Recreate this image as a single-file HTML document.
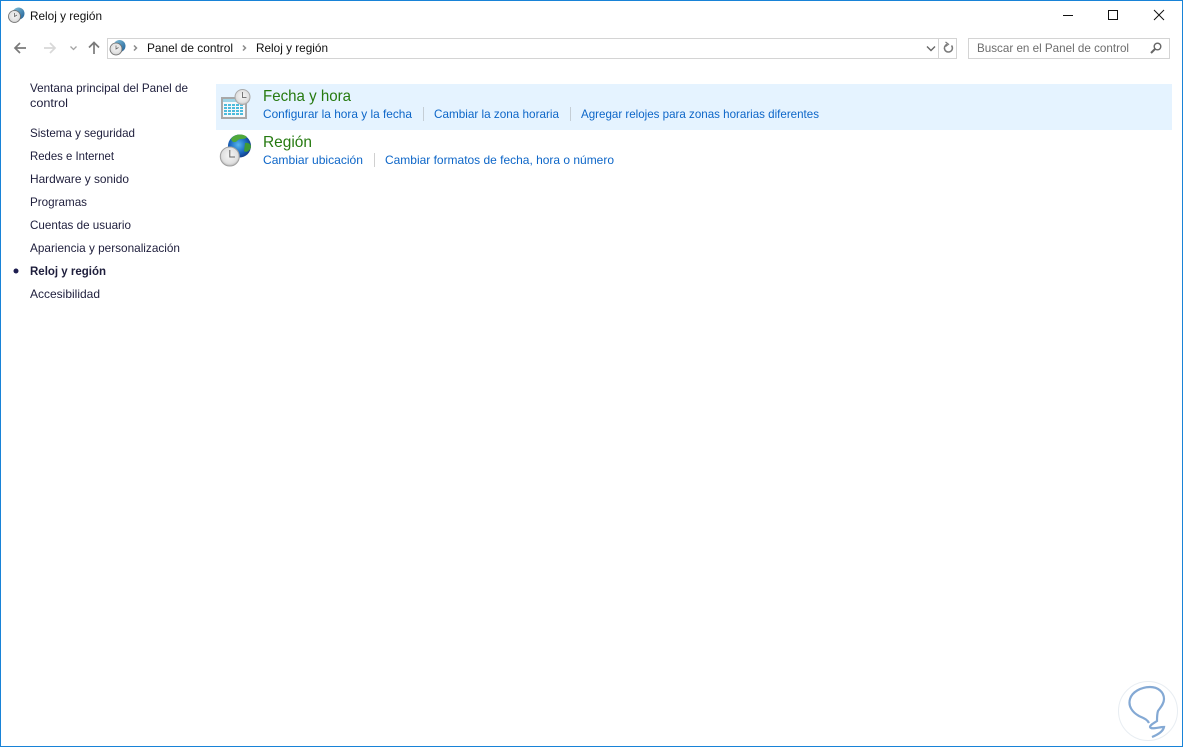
<!DOCTYPE html>
<html lang="es">
<head>
<meta charset="utf-8">
<title>Reloj y región</title>
<style>
html,body{margin:0;padding:0;width:1183px;height:747px;overflow:hidden;background:#fff}
svg{display:block;position:absolute;left:0;top:0}
text{font-family:"Liberation Sans",sans-serif;font-size:12px;fill:#1e1e3c}
.l{fill:#0d66c8}
.g{font-size:16px;fill:#267a10}
.b{fill:#111}
</style>
</head>
<body>
<svg width="1183" height="747" viewBox="0 0 1183 747" xmlns="http://www.w3.org/2000/svg">
<defs>
<radialGradient id="gl" cx="45%" cy="45%" r="60%"><stop offset="0" stop-color="#58b6ee"/><stop offset=".6" stop-color="#1a68c0"/><stop offset="1" stop-color="#12357e"/></radialGradient>
<radialGradient id="ck" cx="50%" cy="45%" r="60%"><stop offset="0" stop-color="#f6f6f6"/><stop offset=".7" stop-color="#e0e0e0"/><stop offset="1" stop-color="#a8a8a8"/></radialGradient>
<linearGradient id="sm" x1="0" y1="0" x2="1" y2="1"><stop offset="0" stop-color="#86c4dc"/><stop offset="1" stop-color="#1c5c94"/></linearGradient>
</defs>
<rect x="0.5" y="0.5" width="1182" height="746" fill="#fff" stroke="#1883d7"/>

<!-- title -->
<circle cx="18.500" cy="13.500" r="6" fill="url(#sm)"/>
<circle cx="14.500" cy="16.500" r="6" fill="url(#ck)" stroke="#6a6a6a" stroke-width=".8"/>
<path d="M14.500 13V16.500L17 15" fill="none" stroke="#666" stroke-width=".8"/>
<text x="30" y="20" class="b" textLength="72" lengthAdjust="spacingAndGlyphs">Reloj y región</text>

<!-- window controls -->
<rect x="1063" y="15" width="10" height="1" fill="#111"/>
<rect x="1108.500" y="10.500" width="9" height="9" fill="none" stroke="#111"/>
<path d="M1154 10L1164 20M1164 10L1154 20" stroke="#111" stroke-width="1" fill="none"/>

<!-- nav -->
<path d="M26 48H15M20 43L15 48L20 53" fill="none" stroke="#7a7a7a" stroke-width="1.700"/>
<path d="M55 48H44M50 43L55 48L50 53" fill="none" stroke="#d8d8d8" stroke-width="1.700"/>
<path d="M70.500 46.500L73.500 49.500L76.500 46.500" fill="none" stroke="#a4a4a4" stroke-width="1.300"/>
<path d="M94 54V43M89 47.500L94 42.500L99 47.500" fill="none" stroke="#7a7a7a" stroke-width="1.700"/>

<!-- address bar -->
<rect x="107.500" y="38.500" width="849" height="20" fill="#fff" stroke="#d4d4d4"/>
<line x1="938.500" y1="39" x2="938.500" y2="58" stroke="#d4d4d4"/>
<circle cx="119.500" cy="46" r="6" fill="url(#sm)"/>
<circle cx="116" cy="49" r="6" fill="url(#ck)" stroke="#6a6a6a" stroke-width=".8"/>
<path d="M116 45.500V49L118.500 47.500" fill="none" stroke="#666" stroke-width=".8"/>
<path d="M134 45.500L136.500 48L134 50.500" fill="none" stroke="#8a8a8a" stroke-width="1.500"/>
<text x="147" y="52" class="b" textLength="86" lengthAdjust="spacingAndGlyphs">Panel de control</text>
<path d="M243 45.500L245.500 48L243 50.500" fill="none" stroke="#8a8a8a" stroke-width="1.500"/>
<text x="256" y="52" class="b" textLength="72" lengthAdjust="spacingAndGlyphs">Reloj y región</text>
<path d="M927 46.500L931 50.500L935 46.500" fill="none" stroke="#666" stroke-width="1.400"/>
<path d="M951.500 45.500A4 4 0 1 1 947 44.300" fill="none" stroke="#7a7a7a" stroke-width="1.500"/>
<path d="M945.500 42L948.500 44.300L945.500 46.500" fill="none" stroke="#7a7a7a" stroke-width="1.200"/>

<!-- search -->
<rect x="968.500" y="38.500" width="201" height="20" fill="#fff" stroke="#d4d4d4"/>
<text x="977" y="52" style="fill:#6d6d6d" textLength="152" lengthAdjust="spacingAndGlyphs">Buscar en el Panel de control</text>
<circle cx="1157.500" cy="46.500" r="3.300" fill="none" stroke="#666" stroke-width="1.400"/>
<path d="M1155 49L1151 53" stroke="#666" stroke-width="2"/>

<!-- sidebar -->
<text x="30" y="92" textLength="158" lengthAdjust="spacingAndGlyphs">Ventana principal del Panel de</text>
<text x="30" y="107" textLength="38" lengthAdjust="spacingAndGlyphs">control</text>
<text x="30" y="137" textLength="105" lengthAdjust="spacingAndGlyphs">Sistema y seguridad</text>
<text x="30" y="160" textLength="84" lengthAdjust="spacingAndGlyphs">Redes e Internet</text>
<text x="30" y="183" textLength="99" lengthAdjust="spacingAndGlyphs">Hardware y sonido</text>
<text x="30" y="206" textLength="57" lengthAdjust="spacingAndGlyphs">Programas</text>
<text x="30" y="229" textLength="101" lengthAdjust="spacingAndGlyphs">Cuentas de usuario</text>
<text x="30" y="252" textLength="150" lengthAdjust="spacingAndGlyphs">Apariencia y personalización</text>
<circle cx="16" cy="271" r="2.500" fill="#1e1e50"/>
<text x="30" y="275" font-weight="bold" textLength="76" lengthAdjust="spacingAndGlyphs">Reloj y región</text>
<text x="30" y="298" textLength="70" lengthAdjust="spacingAndGlyphs">Accesibilidad</text>

<!-- highlight -->
<rect x="216" y="84" width="956" height="46" fill="#e5f3ff"/>

<!-- calendar icon -->
<rect x="222" y="98" width="24" height="20" fill="#f6f8fa" stroke="#a8a8a8" stroke-width="2"/>
<rect x="223" y="99" width="22" height="3" fill="#9fd4e6"/>
<g fill="#4dbbdc">
<rect x="224" y="104" width="3" height="2"/><rect x="228" y="104" width="3" height="2"/><rect x="232" y="104" width="3" height="2"/><rect x="236" y="104" width="3" height="2"/><rect x="240" y="104" width="3" height="2"/>
<rect x="224" y="107" width="3" height="2"/><rect x="228" y="107" width="3" height="2"/><rect x="232" y="107" width="3" height="2"/><rect x="236" y="107" width="3" height="2"/><rect x="240" y="107" width="3" height="2"/>
<rect x="224" y="110" width="3" height="2"/><rect x="228" y="110" width="3" height="2"/><rect x="232" y="110" width="3" height="2"/><rect x="236" y="110" width="3" height="2"/><rect x="240" y="110" width="3" height="2"/>
<rect x="224" y="113" width="3" height="2"/><rect x="228" y="113" width="3" height="2"/><rect x="232" y="113" width="3" height="2"/><rect x="236" y="113" width="3" height="2"/><rect x="240" y="113" width="3" height="2"/>
</g>
<circle cx="242.500" cy="97" r="7.500" fill="url(#ck)" stroke="#aaa"/>
<path d="M242.500 92V97.500L246.500 97.500" fill="none" stroke="#777" stroke-width="1"/>

<!-- globe icon -->
<circle cx="239.500" cy="146" r="11.500" fill="url(#gl)"/>
<path d="M231 139C234 134 243 133 247 137C245 140 241 138 238 140C236 143 232 143 231 139Z" fill="#4fa83a"/>
<path d="M245 143C248 142 251 144 251 147C250 151 246 153 244 151Z" fill="#3f9a35"/>
<circle cx="229.800" cy="156.500" r="9.500" fill="url(#ck)" stroke="#a0a0a0"/>
<path d="M229.800 150V157L235 157" fill="none" stroke="#666" stroke-width="1"/>

<!-- content -->
<text x="263" y="101" class="g" textLength="88" lengthAdjust="spacingAndGlyphs">Fecha y hora</text>
<text x="263" y="118" class="l" textLength="149" lengthAdjust="spacingAndGlyphs">Configurar la hora y la fecha</text>
<rect x="423" y="107" width="1" height="14" fill="#c5ced6"/>
<text x="434" y="118" class="l" textLength="125" lengthAdjust="spacingAndGlyphs">Cambiar la zona horaria</text>
<rect x="570" y="107" width="1" height="14" fill="#c5ced6"/>
<text x="581" y="118" class="l" textLength="238" lengthAdjust="spacingAndGlyphs">Agregar relojes para zonas horarias diferentes</text>

<text x="263" y="147" class="g" textLength="49" lengthAdjust="spacingAndGlyphs">Región</text>
<text x="263" y="164" class="l" textLength="100" lengthAdjust="spacingAndGlyphs">Cambiar ubicación</text>
<rect x="374" y="153" width="1" height="14" fill="#d0d0d0"/>
<text x="385" y="164" class="l" textLength="229" lengthAdjust="spacingAndGlyphs">Cambiar formatos de fecha, hora o número</text>

<!-- watermark -->
<circle cx="1148" cy="711" r="29.500" fill="#fff" stroke="#e8edf2" stroke-width="1"/>
<path d="M1149 723C1147 719 1143 718 1139 716C1132 712 1128 706 1130 699C1132 692 1141 687 1150 687C1158 687 1164 692 1164 699C1164 704 1160 708 1158 711C1157 714 1157 718 1157 721C1154 723 1150 725 1150 727C1151 730 1159 727 1164 727C1163 732 1157 735 1152 737" fill="none" stroke="#84a9d4" stroke-width="2.200"/>
</svg>
</body>
</html>
